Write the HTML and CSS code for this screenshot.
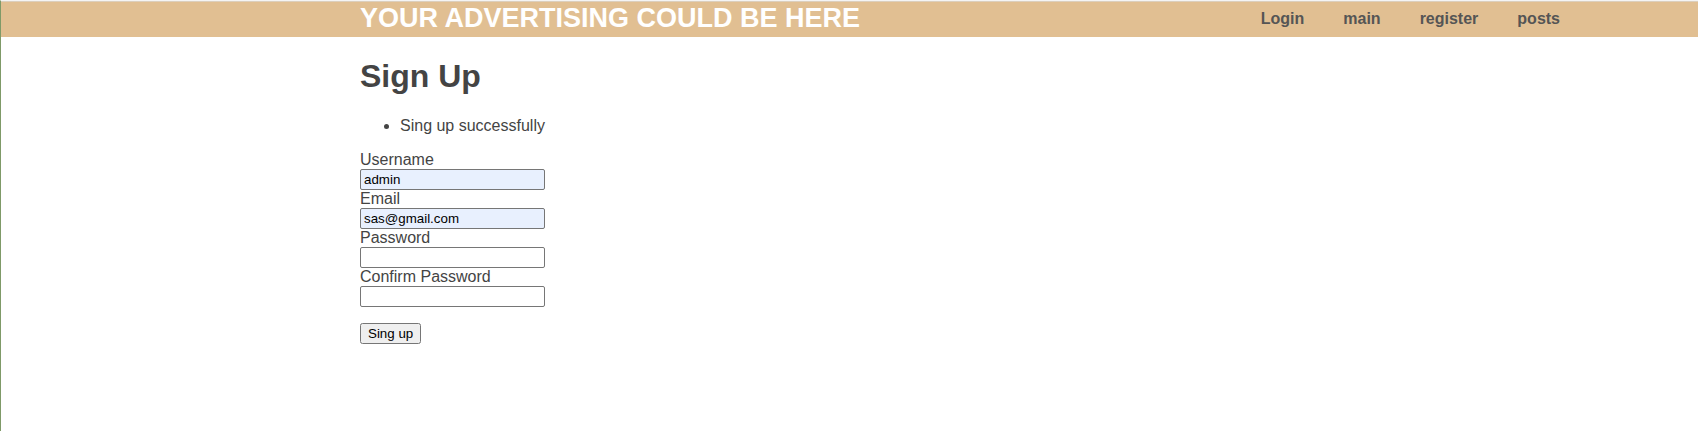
FILE: index.html
```html
<!DOCTYPE html>
<html lang="en">
<head>
<meta charset="utf-8">
<title>Sign Up</title>
<link rel="stylesheet" href="styles.css">
</head>
<body>
<header class="header">
  <div class="container header-row">
    <div class="brand">YOUR ADVERTISING COULD BE HERE</div>
    <nav class="nav">
      <a href="#login">Login</a>
      <a href="#main">main</a>
      <a href="#register">register</a>
      <a href="#posts">posts</a>
    </nav>
  </div>
</header>
<main class="container">
  <h1 class="title">Sign Up</h1>
  <ul class="messages">
    <li>Sing up successfully</li>
  </ul>
  <form class="form">
    <label for="username">Username</label>
    <input class="field filled" type="text" id="username" value="admin">
    <label for="email">Email</label>
    <input class="field filled" type="email" id="email" value="sas@gmail.com">
    <label for="password">Password</label>
    <input class="field" type="password" id="password">
    <label for="confirm">Confirm Password</label>
    <input class="field" type="password" id="confirm">
    <button class="submit" type="button">Sing up</button>
  </form>
</main>
</body>
</html>
```
FILE: styles.css
```css
* {
  box-sizing: border-box;
}

body {
  margin: 0;
  min-height: 100vh;
  border-top: 1px solid #f4f4f4;
  border-left: 1px solid #7f9a68;
  background: #fff;
  color: #444;
  font: 16px/18px "Liberation Sans", Arial, sans-serif;
}

.container {
  max-width: 1200px;
  margin: 0 auto 0 359px;
}

.header {
  border-top: 1px solid #dccfbd;
  background: #e1bf92;
}

.header-row {
  display: flex;
  justify-content: space-between;
  padding-bottom: 2px;
}

.brand {
  color: #fff;
  font-size: 27px;
  font-weight: bold;
  line-height: 33px;
}

.nav {
  display: flex;
  gap: 39px;
  line-height: 33px;
}

.nav a {
  color: #555;
  font-weight: bold;
  text-decoration: none;
}

.title {
  margin: 21px 0;
  font-size: 32px;
  line-height: 37px;
}

.messages {
  margin: 22px 0 16px;
  padding-left: 40px;
}

.form {
  display: flex;
  flex-direction: column;
  align-items: flex-start;
}

.field {
  width: 185px;
  height: 21px;
  margin: 0;
  padding: 1px 3px;
  border: 1px solid #767676;
  border-radius: 2px;
  font-family: "Liberation Sans", Arial, sans-serif;
}

.filled {
  background: #e8f0fe;
}

.submit {
  margin-top: 16px;
  padding: 1px 6px;
  font-family: "Liberation Sans", Arial, sans-serif;
}
```
